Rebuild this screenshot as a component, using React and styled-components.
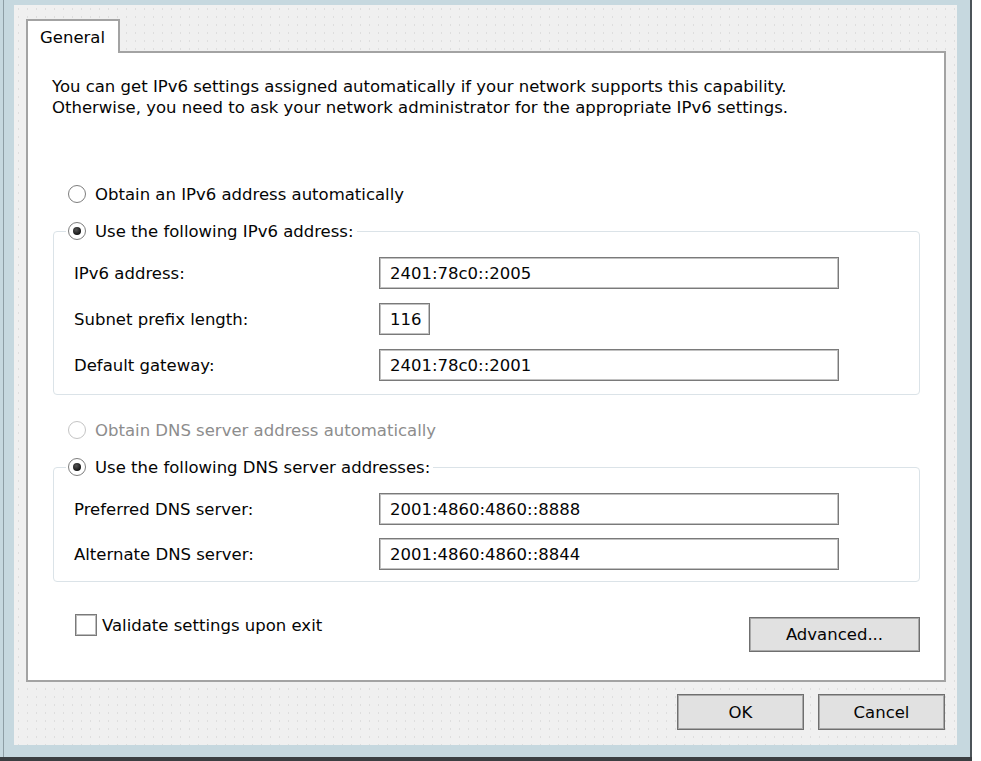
import React from "react";
import styled, { createGlobalStyle } from "styled-components";

const Global = createGlobalStyle`
  html, body {
    margin: 0;
    padding: 0;
    background: #ffffff;
  }
  body {
    font-family: "DejaVu Sans", Tahoma, sans-serif;
    font-size: 16.5px;
    color: #050505;
  }
`;

const Screen = styled.div`
  width: 981px;
  height: 761px;
  display: flex;
  flex-direction: column;
  overflow: hidden;
`;

const Frame = styled.div`
  width: 972px;
  height: 757px;
  box-sizing: border-box;
  padding: 5px 13px 12px 14px;
  border-right: 2px solid #4c5459;
  background: linear-gradient(
    to right,
    #c6d8df 3px,
    #8e9ea5 3px,
    #8e9ea5 4px,
    #c6d8df 4px
  );
`;

const BottomEdge = styled.div`
  width: 972px;
  height: 4px;
  background: #3b3f42;
`;

const Dialog = styled.div`
  height: 100%;
  box-sizing: border-box;
  padding: 14px 11px 14px 12px;
  background-color: #f0f0f0;
  background-image: radial-gradient(#dedede 0.8px, transparent 1px);
  background-size: 9px 8px;
  display: flex;
  flex-direction: column;
`;

const TabStrip = styled.div`
  display: flex;
`;

const Tab = styled.div`
  position: relative;
  z-index: 1;
  height: 32px;
  padding: 0 13px 0 12px;
  display: flex;
  align-items: center;
  background: #ffffff;
  border: 2px solid #a3a3a3;
  border-bottom: none;
  margin-bottom: -2px;
`;

const Panel = styled.div`
  height: 631px;
  box-sizing: border-box;
  background: #ffffff;
  border: 2px solid #a3a3a3;
  padding: 23px 24px 0 24px;
  display: flex;
  flex-direction: column;
`;

const Intro = styled.p`
  margin: 0;
  line-height: 21px;
`;

const RadioRow = styled.label`
  display: flex;
  align-items: center;
  height: 24px;
  padding-left: 16px;
  margin-top: ${p => p.$top}px;
  color: ${p => (p.$disabled ? "#8d8d8d" : "inherit")};
`;

const Circle = styled.span`
  width: 18px;
  height: 18px;
  box-sizing: border-box;
  border-radius: 50%;
  border: 1px solid ${p => (p.$disabled ? "#c4c4c4" : "#7d7d7d")};
  background: #ffffff;
  display: flex;
  align-items: center;
  justify-content: center;
  margin-right: 9px;
  flex-shrink: 0;

  &::after {
    content: "";
    width: 8px;
    height: 8px;
    border-radius: 50%;
    background: radial-gradient(circle at 40% 35%, #555 0, #151515 70%);
    display: ${p => (p.$checked ? "block" : "none")};
  }
`;

const Group = styled.fieldset`
  margin: 13px 0 0 1px;
  padding: 14px 20px ${p => p.$bottom}px 20px;
  border: 1px solid #dbe3e8;
  border-radius: 4px;
  display: flex;
  flex-direction: column;
  gap: ${p => p.$gap}px;
  min-width: 0;
`;

const Legend = styled.legend`
  padding: 0 3px 0 0;
  margin-left: -8px;
  background: #ffffff;

  ${RadioRow} {
    padding-left: 2px;
  }
`;

const FieldRow = styled.div`
  display: flex;
  align-items: center;
  height: 32px;
`;

const FieldLabel = styled.span`
  width: 305px;
  flex-shrink: 0;
`;

const Input = styled.div`
  width: ${p => p.$width}px;
  height: 100%;
  box-sizing: border-box;
  border: 1px solid #7a7a7a;
  box-shadow: inset 0 0 0 1px #c2c2c2;
  padding: 0 10px;
  display: flex;
  align-items: center;
  background: #ffffff;
`;

const Footer = styled.div`
  display: flex;
  justify-content: space-between;
  align-items: flex-start;
  margin-left: 1px;
`;

const CheckRow = styled.label`
  display: flex;
  align-items: center;
  margin: 32px 0 0 22px;
`;

const CheckBox = styled.span`
  width: 22px;
  height: 22px;
  box-sizing: border-box;
  border: 1px solid #7a7a7a;
  box-shadow: inset 0 0 0 1px #bdbdbd;
  background: #ffffff;
  margin-right: 5px;
`;

const Button = styled.div`
  width: ${p => p.$width}px;
  height: ${p => p.$height}px;
  box-sizing: border-box;
  margin-top: ${p => p.$top || 0}px;
  border: 1px solid #6f6f6f;
  box-shadow: inset 0 0 0 1px #a9a9a9;
  background: #e1e1e1;
  display: flex;
  align-items: center;
  justify-content: center;
`;

const ButtonBar = styled.div`
  display: flex;
  justify-content: flex-end;
  gap: 14px;
  margin: 12px 1px 0 0;
`;

const Radio = ({ checked, disabled, top = 0, children }) => (
  <RadioRow $top={top} $disabled={disabled}>
    <Circle $checked={checked} $disabled={disabled} />
    {children}
  </RadioRow>
);

const Field = ({ label, value, width = 460 }) => (
  <FieldRow>
    <FieldLabel>{label}</FieldLabel>
    <Input $width={width}>{value}</Input>
  </FieldRow>
);

export default function App() {
  return (
    <>
      <Global />
      <Screen>
        <Frame>
          <Dialog>
            <TabStrip>
              <Tab>General</Tab>
            </TabStrip>
            <Panel>
              <Intro>
                You can get IPv6 settings assigned automatically if your network supports this capability.
                <br />
                Otherwise, you need to ask your network administrator for the appropriate IPv6 settings.
              </Intro>

              <Radio top={64}>Obtain an IPv6 address automatically</Radio>

              <Group $gap={14} $bottom={13}>
                <Legend>
                  <Radio checked>Use the following IPv6 address:</Radio>
                </Legend>
                <Field label="IPv6 address:" value="2401:78c0::2005" />
                <Field label="Subnet prefix length:" value="116" width={51} />
                <Field label="Default gateway:" value="2401:78c0::2001" />
              </Group>

              <Radio top={23} disabled>
                Obtain DNS server address automatically
              </Radio>

              <Group $gap={13} $bottom={11}>
                <Legend>
                  <Radio checked>Use the following DNS server addresses:</Radio>
                </Legend>
                <Field label="Preferred DNS server:" value="2001:4860:4860::8888" />
                <Field label="Alternate DNS server:" value="2001:4860:4860::8844" />
              </Group>

              <Footer>
                <CheckRow>
                  <CheckBox />
                  Validate settings upon exit
                </CheckRow>
                <Button $width={171} $height={35} $top={35}>
                  Advanced...
                </Button>
              </Footer>
            </Panel>
            <ButtonBar>
              <Button $width={127} $height={36}>OK</Button>
              <Button $width={127} $height={36}>Cancel</Button>
            </ButtonBar>
          </Dialog>
        </Frame>
        <BottomEdge />
      </Screen>
    </>
  );
}
